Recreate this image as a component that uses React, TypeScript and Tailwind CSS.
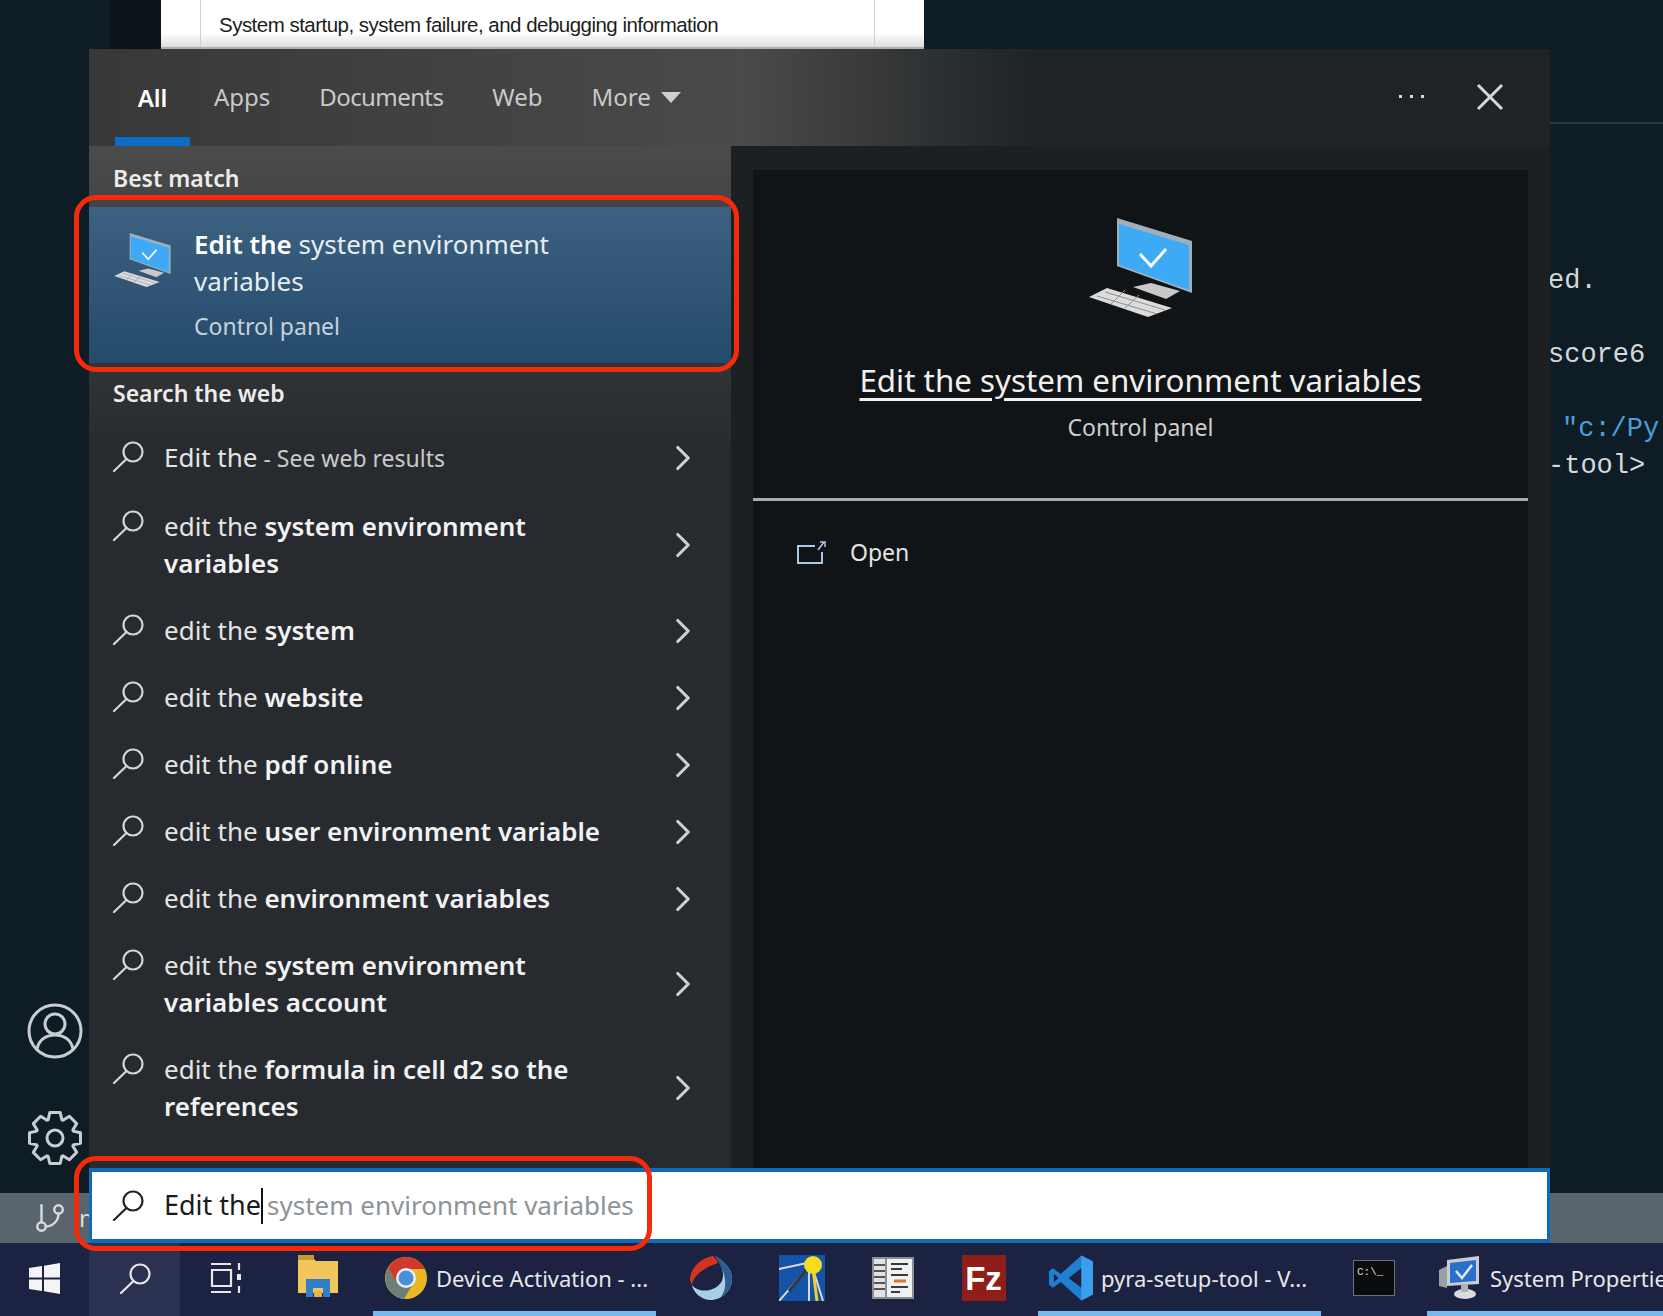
import { ChevronRight, GitBranch } from "lucide-react";
import { FC, ReactNode } from "react";

const SearchGlyph: FC<{ color?: string }> = ({ color = "#d6d6d6" }) => (
  <svg width="32" height="31" viewBox="0 0 32 31" fill="none" stroke={color} strokeWidth="2.2" strokeLinecap="round">
    <circle cx="21" cy="11" r="9.5" />
    <path d="M14.5 18 L2 30" />
  </svg>
);

const MonitorIcon: FC<{ className: string }> = ({ className }) => (
  <svg className={className} viewBox="0 0 103 99">
    <polygon points="28,0 103,23 103,75 28,48" fill="#9fb0bd" />
    <polygon points="30,6 100,27 100,72 30,47" fill="#3eaaf6" />
    <path d="M51 36 L62 48 L77 31" fill="none" stroke="#fff" strokeWidth="3" />
    <polygon points="44,69 62,65 91,73 77,81" fill="#c9c9c9" />
    <polygon points="0,79 18,70 83,90 59,99" fill="#dcdcdc" />
    <path d="M8 78 L68 96 M16 74 L76 92 M22 86 L36 72 M36 90 L50 77" stroke="#8f8f8f" strokeWidth="1" />
  </svg>
);

// 8 tooth gear outline, same as the start menu one
const gearPath = () => {
  const pts: string[] = [];
  for (let i = 0; i < 8; i++) {
    const a = (i * Math.PI) / 4 - Math.PI / 2;
    const at = (r: number, d: number) => `${(28 + r * Math.cos(a + d)).toFixed(1)} ${(28 + r * Math.sin(a + d)).toFixed(1)}`;
    pts.push(`${i === 0 ? "M" : "L"}${at(19.5, -0.36)}`, `L${at(26, -0.2)}`, `L${at(26, 0.2)}`, `L${at(19.5, 0.36)}`);
  }
  return pts.join(" ") + "Z";
};

const ChromeIcon = () => (
  <svg width="44" height="44" viewBox="0 0 44 44">
    <circle cx="22" cy="22" r="21" fill="#e8b923" />
    <path d="M22 1 A21 21 0 0 0 4 12 L13 27 L22 13 L41 13 A21 21 0 0 0 22 1Z" fill="#d3382c" />
    <path d="M4 12 A21 21 0 0 0 20 43 L29 28 L14 28Z" fill="#6d7f76" />
    <circle cx="22" cy="22" r="10" fill="#e8eef5" />
    <circle cx="22" cy="22" r="7.5" fill="#4a90d9" />
  </svg>
);

const FolderIcon = () => (
  <svg width="40" height="46" viewBox="0 0 40 46">
    <path d="M0 3 H15 L18 6 H40 V38 H0Z" fill="#f3c65c" />
    <rect x="0" y="0" width="16" height="5" fill="#c9982f" />
    <path d="M8 42 V24 H32 V42 H25 V33 H15 V42Z" fill="#2f7fc9" />
    <rect x="16" y="36" width="8" height="6" fill="#e7b344" />
  </svg>
);

const CrescentIcon = () => (
  <svg width="44" height="46" viewBox="0 0 44 46">
    <path d="M26 1 C36 7 43 14 43 24 C43 36 32 45 22 45 C12 45 4 37 3 30 C9 38 26 38 33 26 C36 18 32 8 26 1Z" fill="#a9cfe6" />
    <path d="M26 1 C36 7 43 14 43 24 C43 32 38 39 32 42 C38 34 39 20 26 1Z" fill="#2c5f8f" />
    <path d="M24 1 C12 3 2 12 1 24 C1 26 2 28 3 30 C4 22 13 13 29 8 C28 5 26 3 24 1Z" fill="#d3331f" />
  </svg>
);

const SunIcon = () => (
  <svg width="46" height="46" viewBox="0 0 46 46">
    <rect width="46" height="46" fill="#1553a8" />
    <path d="M0 14 L28 8 M0 46 L28 14 M30 46 L30 14 M44 46 L34 14" stroke="#d9d9d9" strokeWidth="2" />
    <path d="M10 36 L28 14" stroke="#31363b" strokeWidth="3" />
    <path d="M38 46 L34 14" stroke="#f1cf2c" strokeWidth="3" />
    <circle cx="34" cy="10" r="9" fill="#f7dc1f" />
  </svg>
);

const RackIcon = () => (
  <svg width="42" height="42" viewBox="0 0 42 42">
    <rect width="42" height="42" fill="#8d9092" />
    <rect x="2" y="2" width="11" height="38" fill="#e2e2e2" />
    <rect x="15" y="2" width="25" height="38" fill="#f1f1f1" />
    <path d="M2 8 H13 M2 14 H13 M2 20 H13 M2 26 H13 M2 32 H13" stroke="#555" strokeWidth="2" />
    <path d="M19 7 H36 M19 12 H30 M19 18 H36 M19 30 H36 M19 35 H28" stroke="#3a3a3a" strokeWidth="2" />
    <path d="M22 24 H34" stroke="#d9772c" strokeWidth="3" />
  </svg>
);

const FzIcon = () => (
  <div className="flex h-[46px] w-[44px] items-center justify-center bg-[#8f1d18]">
    <span className="text-[33px] leading-none font-bold text-white [font-family:'Liberation_Sans',sans-serif]">Fz</span>
  </div>
);

const VsCodeIcon = () => (
  <svg width="45" height="46" viewBox="0 0 45 46">
    <path d="M33 0 L45 6 V40 L33 46 L12 27 L4 33 L0 30 V16 L4 13 L12 19Z" fill="#1f7fd0" />
    <path d="M33 0 L45 6 V40 L33 46Z" fill="#3aa0ec" />
    <path d="M33 13 L20 23 L33 33Z" fill="#1c2242" />
    <path d="M5 19 L10 23 L5 27Z" fill="#1c2242" />
  </svg>
);

const CmdIcon = () => (
  <div className="flex h-[36px] w-[42px] items-start border border-[#6b6f78] bg-[#0b0c0e] pl-[3px] pt-[6px]">
    <span className="text-[11px] leading-none text-[#d6d6d6] [font-family:'Liberation_Mono',monospace]">C:\_</span>
  </div>
);

const SysPropsIcon = () => (
  <svg width="42" height="44" viewBox="0 0 42 44">
    <polygon points="8,4 40,0 40,28 8,30" fill="#c9ced3" />
    <polygon points="11,7 37,4 37,25 11,27" fill="#2a6fc9" />
    <path d="M17 15 L23 22 L33 9" fill="none" stroke="#dfeeff" strokeWidth="2.5" />
    <polygon points="0,14 8,10 8,32 0,30" fill="#9aa0a6" />
    <ellipse cx="26" cy="38" rx="11" ry="5" fill="#dcdcdc" />
    <rect x="22" y="28" width="7" height="8" fill="#aeb2b6" />
  </svg>
);

const TaskButton: FC<{ icon: ReactNode; label: string; width: string }> = ({ icon, label, width }) => (
  <div className={`relative flex h-full shrink-0 items-center gap-[8px] pb-[3px] pl-[11px] ${width}`}>
    <div className="flex w-[44px] shrink-0 justify-center">{icon}</div>
    <span className="whitespace-nowrap text-[22px] text-[#e8e8ea]">{label}</span>
    <div className="absolute right-0 bottom-0 left-0 h-[5px] bg-[#76b9ed]" />
  </div>
);

const TaskIcon: FC<{ children: ReactNode; width?: string }> = ({ children, width = "w-[91px]" }) => (
  <div className={`flex h-full shrink-0 items-center justify-center pb-[3px] ${width}`}>{children}</div>
);

type WebRow = { plain: string; bold?: string; hint?: string };

const WEB_ROWS: WebRow[] = [
  { plain: "Edit the", hint: " - See web results" },
  { plain: "edit the ", bold: "system environment variables" },
  { plain: "edit the ", bold: "system" },
  { plain: "edit the ", bold: "website" },
  { plain: "edit the ", bold: "pdf online" },
  { plain: "edit the ", bold: "user environment variable" },
  { plain: "edit the ", bold: "environment variables" },
  { plain: "edit the ", bold: "system environment variables account" },
  { plain: "edit the ", bold: "formula in cell d2 so the references" },
];

const Row: FC<{ row: WebRow; first: boolean }> = ({ row, first }) => (
  <div className={`flex items-center pl-[23px] ${first ? "mb-[1px]" : ""}`}>
    <div className="w-[52px] shrink-0 self-start pt-[17px]">
      <SearchGlyph />
    </div>
    <div className="w-[460px] shrink-0 py-[15px] text-[26px] leading-[37px] text-[#e4e4e4]">
      {row.plain}
      {row.bold && <span className="font-semibold text-[#f2f2f2]">{row.bold}</span>}
      {row.hint && <span className="text-[23px] text-[#c9c9c9]">{row.hint}</span>}
    </div>
    <ChevronRight className="ml-[38px] text-[#d0d0d0]" size={42} strokeWidth={1.8} />
  </div>
);

export default function App() {
  return (
    <div className="relative flex h-[1316px] w-[1663px] flex-col overflow-hidden bg-[#0e1c26] [font-family:'Noto_Sans',sans-serif]">
      {/* window behind the search panel */}
      <div className="flex h-[49px] shrink-0">
        <div className="w-[110px] bg-[#0e1c26]" />
        <div className="w-[51px] bg-[#0a1319]" />
        <div className="flex w-[763px] border-b-2 border-[#b0b0b0] bg-linear-to-b from-white from-70% to-[#dedede]">
          <div className="flex w-[714px] border-r border-[#d0d0d0] pl-[39px]">
            <div className="h-full border-l border-[#d0d0d0] pl-[18px] text-[20.5px] leading-[49px] tracking-[-0.52px] whitespace-nowrap text-[#1c1c1c] [font-family:'Liberation_Sans',sans-serif]">
              System startup, system failure, and debugging information
            </div>
          </div>
        </div>
      </div>

      <div className="flex h-[1194px] shrink-0">
        {/* left rail */}
        <div className="flex w-[89px] shrink-0 flex-col justify-end bg-[#0e1c26]">
          <div className="flex flex-col items-center pl-[21px] text-[#c9cdd0]">
            <svg width="56" height="56" viewBox="0 0 56 56" fill="none" stroke="currentColor" strokeWidth="3">
              <circle cx="28" cy="28" r="26" />
              <circle cx="28" cy="21" r="10" />
              <path d="M10 46 C12 36 20 32 28 32 C36 32 44 36 46 46" />
            </svg>
            <svg className="mt-[51px] mb-[27px]" width="56" height="56" viewBox="0 0 56 56" fill="none" stroke="currentColor" strokeWidth="3" strokeLinejoin="round">
              <path d={gearPath()} />
              <circle cx="28" cy="28" r="8" />
            </svg>
          </div>
          <div className="flex h-[50px] items-center overflow-hidden bg-[#59646d] pl-[33px] text-[#d8dcdf]">
            <GitBranch className="shrink-0" size={34} strokeWidth={1.7} />
            <span className="ml-[12px] text-[24px]">m</span>
          </div>
        </div>

        {/* search panel */}
        <div className="flex w-[1461px] shrink-0 flex-col">
          <div className="flex h-[97px] shrink-0 items-start bg-linear-to-r from-[#383838] via-[#4a4a4a] via-45% to-[#1f2326] to-65% text-[24px] text-[#c9c9c9]">
            <div className="ml-[26px] flex h-full w-[75px] flex-col items-center justify-end">
              <span className="mb-[21px] font-semibold text-white">All</span>
              <div className="h-[9px] w-full bg-[#0a6cc4]" />
            </div>
            <div className="ml-[24px] flex h-full items-start gap-[49px] pt-[30px] leading-[36px]">
              <span>Apps</span>
              <span className="tracking-[-0.6px]">Documents</span>
              <span>Web</span>
              <span className="flex items-center gap-[10px]">
                More
                <svg width="20" height="11" viewBox="0 0 20 11" fill="#d0d0d0">
                  <path d="M0 0 H20 L10 11Z" />
                </svg>
              </span>
            </div>
            <div className="ml-auto flex h-full items-center gap-[52px] pr-[46px] pb-[2px] text-[#d8d8d8]">
              <div className="flex gap-[8px]">
                <div className="h-[3px] w-[3px] bg-[#d8d8d8]" />
                <div className="h-[3px] w-[3px] bg-[#d8d8d8]" />
                <div className="h-[3px] w-[3px] bg-[#d8d8d8]" />
              </div>
              <svg width="28" height="28" viewBox="0 0 28 28" stroke="currentColor" strokeWidth="3">
                <path d="M2 2 L26 26 M26 2 L2 26" />
              </svg>
            </div>
          </div>

          <div className="flex min-h-0 flex-1">
            <div className="flex w-[642px] shrink-0 flex-col bg-linear-to-b from-[#4b4b4b] to-[#272b2f] to-30%">
              <div className="flex h-[61px] shrink-0 items-center pt-[3px] pl-[24px] text-[23px] font-semibold text-[#ececec]">
                Best match
              </div>
              <div className="flex h-[156px] shrink-0 bg-linear-to-b from-[#3d6180] to-[#244a6c] pl-[25px]">
                <MonitorIcon className="mt-[26px] h-[54px] w-[57px]" />
                <div className="ml-[23px] w-[400px] pt-[19px] text-[26px] leading-[37px] text-[#e6edf2]">
                  <span className="font-semibold text-white">Edit the</span> system environment variables
                  <div className="mt-[9px] text-[23px] leading-[34px] text-[#c8d2da]">Control panel</div>
                </div>
              </div>
              <div className="flex h-[61px] shrink-0 items-center pl-[24px] text-[23px] font-semibold text-[#ececec]">
                Search the web
              </div>
              {WEB_ROWS.map((row, i) => (
                <Row key={row.plain + (row.bold ?? "")} row={row} first={i === 0} />
              ))}
            </div>

            <div className="flex min-w-0 flex-1 bg-[#1d2023] px-[22px] pt-[24px]">
              <div className="flex flex-1 flex-col items-center bg-[#101416]">
                <MonitorIcon className="mt-[48px] h-[99px] w-[103px]" />
                <div className="mt-[41px] text-[31.3px] leading-[44px] text-[#f0f0f0] underline underline-offset-[6px]">
                  Edit the system environment variables
                </div>
                <div className="mt-[8px] text-[23px] leading-[34px] text-[#cfcfcf]">Control panel</div>
                <div className="mt-[54px] h-[3px] w-full shrink-0 bg-[#a9a9a9]" />
                <div className="flex w-full items-center pt-[34px] pl-[44px] text-[23px] text-[#e4e4e4]">
                  <svg width="29" height="23" viewBox="0 0 29 23" fill="none" stroke="#a8c8e6" strokeWidth="2">
                    <path d="M18 5 H1 V22 H25 V11" />
                    <path d="M21 9 L27 1 M23 1 H28 V6" strokeWidth="1.5" />
                  </svg>
                  <span className="ml-[24px]">Open</span>
                </div>
              </div>
            </div>
          </div>

          {/* search box */}
          <div className="flex h-[75px] shrink-0 items-center gap-[20px] border-y-[4px] border-x-[3px] border-[#0f6ab8] bg-white pl-[20px] text-[27px]">
            <SearchGlyph color="#222" />
            <div className="flex items-center">
              <span className="text-[#1a1a1a]">Edit the</span>
              <div className="h-[36px] w-[2px] bg-[#111]" />
              <span className="ml-[4px] text-[26px] text-[#8d9396]">system environment variables</span>
            </div>
          </div>
        </div>

        {/* editor behind the panel on the right */}
        <div className="flex min-w-0 flex-1 flex-col overflow-hidden bg-[#0e1c26]">
          <div className="mt-[73px] h-[2px] shrink-0 bg-[#2c3744]" />
          <div className="-ml-[2px] flex-1 pt-[139px] text-[27px] leading-[37px] whitespace-nowrap text-[#d4d8da] [font-family:'Liberation_Mono',monospace]">
            <div className="h-[74px]">ed.</div>
            <div className="h-[74px]">score6</div>
            <div className="pl-[14px] text-[#4a9fdc]">"c:/Py</div>
            <div>-tool&gt;</div>
          </div>
          <div className="h-[50px] shrink-0 bg-[#59646d]" />
        </div>
      </div>

      {/* taskbar */}
      <div className="flex min-h-0 flex-1 items-center bg-[#1c2242]">
        <TaskIcon width="w-[89px]">
          <svg width="31" height="31" viewBox="0 0 31 31" fill="#f4f4f4">
            <path d="M0 5 L13 3 V14.5 H0Z M15 2.7 L31 0 V14.5 H15Z M0 16.5 H13 V28 L0 26Z M15 16.5 H31 V31 L15 28.3Z" />
          </svg>
        </TaskIcon>
        <TaskIcon width="w-[91px] bg-[#2b3150]">
          <SearchGlyph color="#e8e8e8" />
        </TaskIcon>
        <TaskIcon>
          <svg width="32" height="32" viewBox="0 0 32 32" fill="none" stroke="#e8e8e8" strokeWidth="2.2">
            <path d="M1 2 H21 M1 30 H21 M2 8 H21 V24 H2Z M29 1 V8 M29 24 V31" />
            <rect x="27" y="12" width="4" height="6" fill="#e8e8e8" stroke="none" />
          </svg>
        </TaskIcon>
        <TaskIcon width="w-[102px] pr-[8px]">
          <FolderIcon />
        </TaskIcon>
        <TaskButton icon={<ChromeIcon />} label="Device Activation - ..." width="w-[283px]" />
        <TaskIcon width="w-[91px] ml-[9px]">
          <CrescentIcon />
        </TaskIcon>
        <TaskIcon>
          <SunIcon />
        </TaskIcon>
        <TaskIcon>
          <RackIcon />
        </TaskIcon>
        <TaskIcon>
          <FzIcon />
        </TaskIcon>
        <TaskButton icon={<VsCodeIcon />} label="pyra-setup-tool - V..." width="w-[283px] ml-[9px]" />
        <TaskIcon width="w-[106px]">
          <CmdIcon />
        </TaskIcon>
        <TaskButton icon={<SysPropsIcon />} label="System Properties" width="w-[283px]" />
      </div>

      {/* red annotations */}
      <div className="absolute top-[195px] left-[74px] h-[177px] w-[665px] rounded-[22px] border-[5px] border-[#f52a08]" />
      <div className="absolute top-[1156px] left-[74px] h-[95px] w-[578px] rounded-[22px] border-[5px] border-[#f52a08]" />
    </div>
  );
}
